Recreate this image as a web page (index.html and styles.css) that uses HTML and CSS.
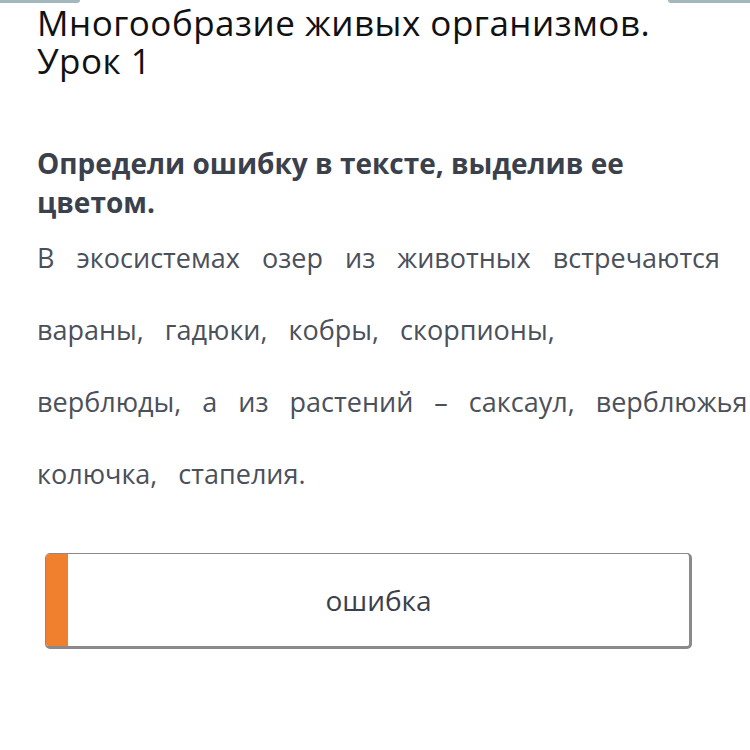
FILE: index.html
```html
<!DOCTYPE html>
<html lang="ru">
<head>
<meta charset="utf-8">
<link rel="stylesheet" href="styles.css">
</head>
<body>
<div class="tabs">
  <div class="tab tab-left"></div>
  <div class="tab tab-right"></div>
</div>
<main class="page">
  <h1 class="title">Многообразие живых организмов.<br>Урок 1</h1>
  <h2 class="question">Определи ошибку в тексте, выделив ее цветом.</h2>
  <div class="passage">
    <div class="line line-justify">В экосистемах озер из животных встречаются</div>
    <div class="line">вараны, гадюки, кобры, скорпионы,</div>
    <div class="line">верблюды, а из растений – саксаул, верблюжья</div>
    <div class="line">колючка, стапелия.</div>
  </div>
  <div class="answer">
    <div class="answer-bar"></div>
    <div class="answer-text">ошибка</div>
  </div>
</main>
</body>
</html>
```

FILE: styles.css
```css
html, body {
  margin: 0;
  padding: 0;
  background: #ffffff;
  width: 750px;
  height: 750px;
  overflow: hidden;
}

body {
  font-family: "Open Sans", "Noto Sans", sans-serif;
}

.tabs {
  display: flex;
  justify-content: space-between;
  height: 3px;
}

.tab {
  height: 3px;
  background: #a3b7bd;
}

.tab-left {
  width: 80px;
  border-bottom-right-radius: 3px;
}

.tab-right {
  width: 82px;
  border-bottom-left-radius: 3px;
}

.page {
  padding-left: 37px;
}

.title {
  margin: 1px 0 0 0;
  font-size: 35px;
  line-height: 38px;
  letter-spacing: 0.5px;
  font-weight: 400;
  color: #111111;
}

.question {
  margin: 64px 0 0 0;
  width: 680px;
  font-size: 28px;
  line-height: 39px;
  font-weight: 700;
  color: #3b414c;
}

.passage {
  font-size: 27px;
  line-height: 72px;
  color: #4b505a;
  word-spacing: 14px;
}

.line {
  white-space: nowrap;
}

.line-justify {
  width: 683px;
  text-align: justify;
  text-align-last: justify;
}

.answer {
  display: flex;
  margin-top: 43px;
  margin-left: 8px;
  width: 647px;
  height: 96px;
  border: 1px solid #8a8a8a;
  border-right-width: 3px;
  border-bottom-width: 3px;
  border-radius: 5px;
  overflow: hidden;
  box-sizing: border-box;
  background: #ffffff;
}

.answer-bar {
  width: 22px;
  flex: none;
  background: #f07f2e;
}

.answer-text {
  flex: 1;
  display: flex;
  align-items: center;
  justify-content: center;
  font-size: 28px;
  color: #3b414c;
}
```
